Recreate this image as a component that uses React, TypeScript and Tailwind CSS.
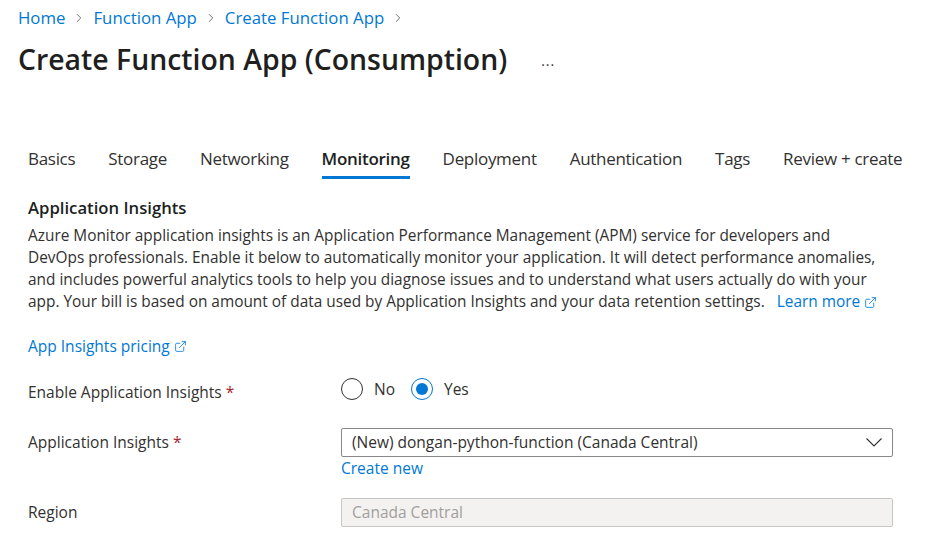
import { ChevronRight, ExternalLink } from 'lucide-react'

const TABS = ['Basics', 'Storage', 'Networking', 'Monitoring', 'Deployment', 'Authentication', 'Tags', 'Review + create']

const FONT = { fontFamily: '"Segoe UI", "Open Sans", "Noto Sans", sans-serif' }

function Radio({ checked, label }: { checked: boolean; label: string }) {
  return (
    <label className="flex items-center gap-[11px]">
      <span
        className={
          'flex h-[22px] w-[22px] items-center justify-center rounded-full border ' +
          (checked ? 'border-[#0078d4]' : 'border-[#323130]')
        }
      >
        {checked && <span className="h-[12px] w-[12px] rounded-full bg-[#0078d4]" />}
      </span>
      <span className="text-[15.5px] text-[#323130]">{label}</span>
    </label>
  )
}

export default function App() {
  return (
    <div className="h-[541px] w-[928px] overflow-hidden bg-white text-[#323130]" style={FONT}>
      {/* breadcrumb */}
      <div className="flex items-center gap-[7px] pl-[18px] pt-[5px] text-[16.8px] text-[#0078d4]">
        <span>Home</span>
        <ChevronRight className="h-[14px] w-[14px] text-[#605e5c]" strokeWidth={1.5} />
        <span>Function App</span>
        <ChevronRight className="h-[14px] w-[14px] text-[#605e5c]" strokeWidth={1.5} />
        <span>Create Function App</span>
        <ChevronRight className="h-[14px] w-[14px] text-[#605e5c]" strokeWidth={1.5} />
      </div>

      {/* title */}
      <div className="flex items-center pl-[18px] pt-[8px]">
        <h1 className="text-[28.4px] font-semibold text-[#201f1e]">Create Function App (Consumption)</h1>
        <span className="ml-[34px] pt-[2px] text-[14px] tracking-[1px] text-[#323130]">...</span>
      </div>

      {/* tabs */}
      <div className="mt-[65px] flex gap-[33px] pl-[28px] text-[17px] tracking-[-0.3px]">
        {TABS.map((t) => (
          <div key={t} className="flex flex-col">
            <span className={t === 'Monitoring' ? 'font-semibold text-[#201f1e]' : 'text-[#323130]'}>{t}</span>
            <span className={'mt-[5px] h-[3px] ' + (t === 'Monitoring' ? 'bg-[#0078d4]' : '')} />
          </div>
        ))}
      </div>

      <div className="pl-[28px] pt-[16px] text-[15.5px]">
        <h2 className="text-[16.7px] font-semibold text-[#201f1e]">Application Insights</h2>
        <p className="mt-[5px] text-[15.4px] leading-[22px] text-[#323130]">
          Azure Monitor application insights is an Application Performance Management (APM) service for developers and
          <br />
          DevOps professionals. Enable it below to automatically monitor your application. It will detect performance anomalies,
          <br />
          and includes powerful analytics tools to help you diagnose issues and to understand what users actually do with your
          <br />
          app. Your bill is based on amount of data used by Application Insights and your data retention settings.
          <span className="ml-[12px] inline-flex items-center gap-[4px] text-[#0078d4]">
            Learn more
            <ExternalLink className="h-[13px] w-[13px]" strokeWidth={1.5} />
          </span>
        </p>

        <div className="mt-[22px] flex items-center gap-[4px] text-[#0078d4]">
          App Insights pricing
          <ExternalLink className="h-[13px] w-[13px]" strokeWidth={1.5} />
        </div>

        <div className="mt-[19px] flex items-start">
          <div className="w-[313px] pt-[3px]">
            Enable Application Insights <span className="text-[#a4262c]">*</span>
          </div>
          <div className="flex items-center gap-[16px]">
            <Radio checked={false} label="No" />
            <Radio checked label="Yes" />
          </div>
        </div>

        <div className="mt-[24px] flex items-start">
          <div className="w-[313px] pt-[3px]">
            Application Insights <span className="text-[#a4262c]">*</span>
          </div>
          <div className="flex flex-col">
            <div className="flex h-[29px] w-[552px] items-center justify-between rounded-[2px] border border-[#8a8886] pl-[10px] pr-[10px]">
              <span>(New) dongan-python-function (Canada Central)</span>
              <svg width="16" height="9" viewBox="0 0 16 9" fill="none" stroke="#323130" strokeWidth="1.1">
                <path d="M0.5 0.5 8 8 15.5 0.5" />
              </svg>
            </div>
            <span className="text-[#0078d4]">Create new</span>
          </div>
        </div>

        <div className="mt-[18px] flex items-center">
          <div className="w-[313px]">Region</div>
          <div className="flex h-[29px] w-[552px] items-center rounded-[2px] border border-[#c8c6c4] bg-[#f3f2f1] pl-[10px] text-[#a19f9d]">
            Canada Central
          </div>
        </div>
      </div>
    </div>
  )
}
